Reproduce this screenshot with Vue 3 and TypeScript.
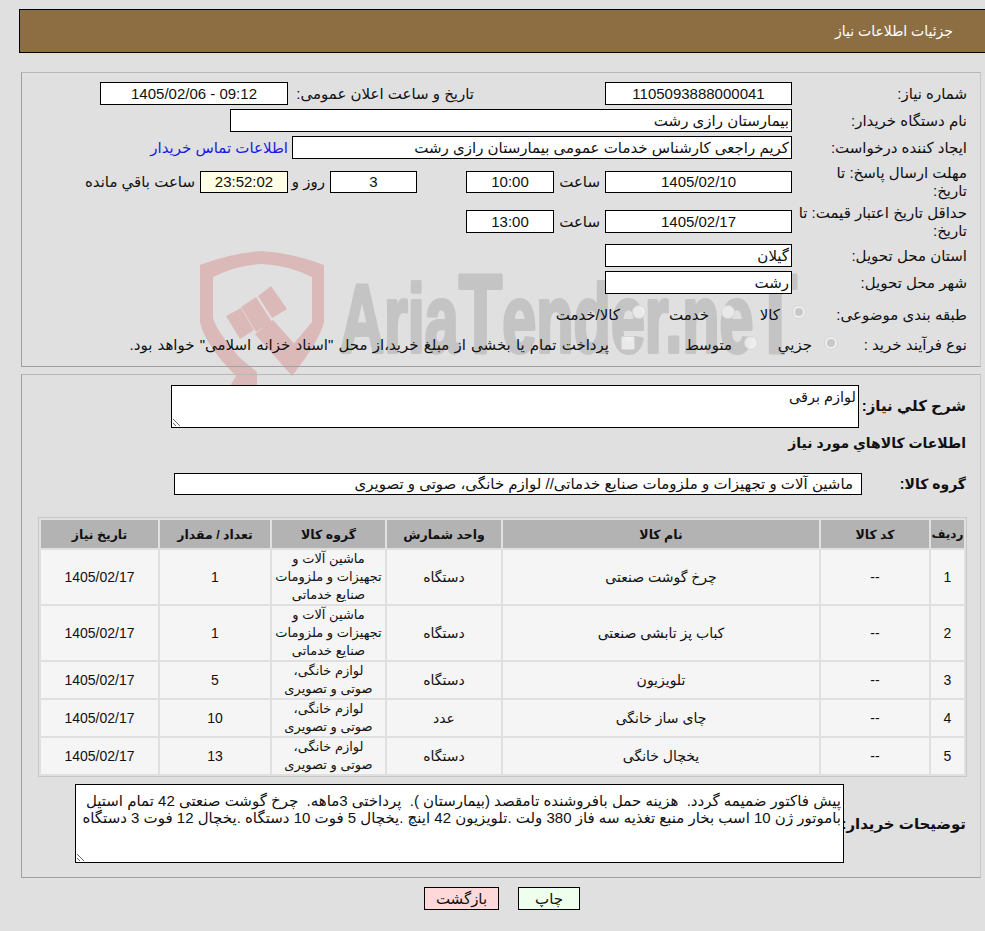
<script setup lang="ts">
const heavy = 'ماشین آلات و\nتجهیزات و ملزومات\nصنایع خدماتی'
const home = 'لوازم خانگی،\nصوتی و تصویری'
const rows = [
  { id: 1, name: 'چرخ گوشت صنعتی', unit: 'دستگاه', group: heavy, qty: 1, tall: true },
  { id: 2, name: 'کباب پز تابشی صنعتی', unit: 'دستگاه', group: heavy, qty: 1, tall: true },
  { id: 3, name: 'تلویزیون', unit: 'دستگاه', group: home, qty: 5, tall: false },
  { id: 4, name: 'چای ساز خانگی', unit: 'عدد', group: home, qty: 10, tall: false },
  { id: 5, name: 'یخچال خانگی', unit: 'دستگاه', group: home, qty: 13, tall: false },
]
const summary = 'لوازم برقی'
const notes = 'پیش فاکتور ضمیمه گردد.  هزینه حمل بافروشنده تامقصد (بیمارستان ).  پرداختی 3ماهه.  چرخ گوشت صنعتی 42 تمام استیل\nباموتور ژن 10 اسب بخار منبع تغذیه سه فاز 380 ولت .تلویزیون 42 اینچ .یخچال 5 فوت 10 دستگاه .یخچال 12 فوت 3 دستگاه'
</script>

<template>
  <div class="page">
    <svg class="mark" width="620" height="160" viewBox="190 235 620 160">
      <path class="pink" d="M200 265 Q232 253 262 251 Q292 253 324 265 L324 322 Q320 340 292 376 L280 360 L312 322 L312 277 Q287 265 262 264 Q237 265 213 277 L213 318 Q217 332 240 358 L257 372 L257 386 L230 386 L236 376 Q205 345 200 322 Z" />
      <path class="pink" d="M255 334 L273 320 L300 350 L292 376 Z" />
      <path class="pink" d="M226 316 L241 308 L254 330 L240 339 Z" />
      <path class="pink" d="M241 307 L256 297 L272 322 L256 332 Z" />
      <path class="pink" d="M258 296 L271 286 L287 309 L272 318 Z" />
      <text x="340" y="352" textLength="457" lengthAdjust="spacingAndGlyphs" class="mark-text">Aria<tspan class="cap">T</tspan>ender.ne<tspan class="cap">T</tspan></text>
    </svg>

    <header class="title"><span>جزئیات اطلاعات نیاز</span></header>

    <section class="box top">
      <div class="row r1">
        <label class="lbl">شماره نیاز:</label>
        <div class="field w187 c">1105093888000041</div>
        <label class="pub">تاریخ و ساعت اعلان عمومی:</label>
        <div class="field w188 c">09:12 - 1405/02/06</div>
      </div>
      <div class="row r1">
        <label class="lbl">نام دستگاه خریدار:</label>
        <div class="field w562">بیمارستان رازی رشت</div>
      </div>
      <div class="row r1">
        <label class="lbl">ایجاد کننده درخواست:</label>
        <div class="field w500">کریم راجعی کارشناس خدمات عمومی بیمارستان رازی رشت</div>
        <a class="link">اطلاعات تماس خریدار</a>
      </div>
      <div class="row r2">
        <label class="lbl">مهلت ارسال پاسخ: تا<br />تاریخ:</label>
        <div class="field w187 c">1405/02/10</div>
        <span class="hour">ساعت</span>
        <div class="field w88 c">10:00</div>
        <div class="field w87 c day">3</div>
        <span class="rooz">روز و</span>
        <div class="field w88 c count">23:52:02</div>
        <span class="rest">ساعت باقي مانده</span>
      </div>
      <div class="row r3">
        <label class="lbl">حداقل تاریخ اعتبار قیمت: تا تاریخ:</label>
        <div class="field w187 c">1405/02/17</div>
        <span class="hour">ساعت</span>
        <div class="field w88 c">13:00</div>
      </div>
      <div class="row r4">
        <label class="lbl">استان محل تحویل:</label>
        <div class="field w187">گیلان</div>
      </div>
      <div class="row r1">
        <label class="lbl">شهر محل تحویل:</label>
        <div class="field w187">رشت</div>
      </div>
      <div class="row r5">
        <label class="lbl">طبقه بندی موضوعی:</label>
        <div class="options o1">
          <i class="radio on"></i><span class="t1">کالا</span>
          <i class="radio"></i><span class="t2">خدمت</span>
          <i class="radio"></i><span>کالا/خدمت</span>
        </div>
      </div>
      <div class="row r6">
        <label class="lbl lbl2">نوع فرآیند خرید :</label>
        <div class="options o2">
          <i class="radio on"></i><span class="t3">جزيي</span>
          <i class="radio"></i><span class="t4">متوسط</span>
          <i class="check"></i><span class="pay">پرداخت تمام یا بخشی از مبلغ خرید،از محل "اسناد خزانه اسلامی" خواهد بود.</span>
        </div>
      </div>
    </section>

    <section class="box bottom">
      <div class="desc">
        <label class="blbl">شرح كلي نياز:</label>
        <textarea class="ta ta1" readonly :value="summary"></textarea>
      </div>
      <h3 class="sub">اطلاعات کالاهاي مورد نياز</h3>
      <div class="grp">
        <label class="blbl g">گروه کالا:</label>
        <div class="field grpf">ماشین آلات و تجهیزات و ملزومات صنایع خدماتی// لوازم خانگی، صوتی و تصویری</div>
      </div>
      <table class="tbl">
        <colgroup>
          <col class="c1" /><col class="c2" /><col class="c3" /><col class="c4" />
          <col class="c5" /><col class="c6" /><col class="c7" />
        </colgroup>
        <thead>
          <tr>
            <th class="first">ردیف</th><th>کد کالا</th><th>نام کالا</th><th>واحد شمارش</th><th>گروه کالا</th><th>تعداد / مقدار</th><th>تاریخ نیاز</th>
          </tr>
        </thead>
        <tbody>
          <tr v-for="r in rows" :key="r.id" :class="{ tall: r.tall }">
            <td class="id">{{ r.id }}</td>
            <td>--</td>
            <td>{{ r.name }}</td>
            <td>{{ r.unit }}</td>
            <td class="gr">{{ r.group }}</td>
            <td>{{ r.qty }}</td>
            <td>1405/02/17</td>
          </tr>
        </tbody>
      </table>
      <div class="notes">
        <label class="blbl n">توضیحات خریدار:</label>
        <textarea class="ta ta2" readonly :value="notes"></textarea>
      </div>
    </section>

    <div class="actions">
      <button class="btn print">چاپ</button>
      <button class="btn back">بازگشت</button>
    </div>
  </div>
</template>

<style>
html, body { background: #e0e0e0; }
</style>

<style scoped>
.page {
  position: relative;
  width: 985px;
  height: 931px;
  overflow: hidden;
  box-sizing: border-box;
  padding-top: 9px;
  background: #e0e0e0;
  direction: rtl;
  font-family: "Liberation Sans", "DejaVu Sans", sans-serif;
  font-size: 15px;
  color: #111;
}
.mark { position: absolute; left: 190px; top: 235px; }
.pink { fill: #dcb9b9; }
.mark-text {
  font-family: "Liberation Sans", sans-serif;
  font-weight: 700;
  font-size: 96px;
  fill: #c4c4c4;
  stroke: #c4c4c4;
  stroke-width: 4px;
  stroke-linejoin: round;
  direction: ltr;
  unicode-bidi: embed;
}
.cap { font-size: 112px; }
.title {
  position: relative;
  margin-left: 19px;
  height: 44px;
  box-sizing: border-box;
  border: 1px solid #000;
  border-right: 0;
  background: #8d6e42;
  color: #fff;
  display: flex;
  align-items: center;
  padding-right: 32px;
  font-size: 14px;
}
.box {
  position: relative;
  margin: 0 4px 0 0;
  margin-left: 21px;
  box-sizing: border-box;
  border: 1px solid #a8a8a8;
  border-color: #b8b8b8 #c8c8c8 #a0a0a0 #a0a0a0;
}
.top { margin-top: 19px; height: 295px; padding-top: 9px; }
.bottom { margin-top: 7px; height: 504px; padding-top: 10px; }
.row { display: flex; align-items: center; height: 23px; margin-bottom: 4px; padding-right: 13px; }
.r2 { margin-top: 11px; margin-bottom: 17px; }
.r2 .field { height: 22px; line-height: 20px; }
.r3 { margin-bottom: 11px; }
.r4 { margin-bottom: 4px; }
.r5 { margin-top: 9px; margin-bottom: 7px; }
.lbl { width: 175px; flex: none; box-sizing: border-box; line-height: 18px; }
.lbl2 { width: 129px; white-space: nowrap; }
.field {
  box-sizing: border-box;
  height: 23px;
  line-height: 21px;
  border: 1px solid #000;
  background: #fff;
  padding: 0 2px;
  flex: none;
  white-space: nowrap;
}
.c { text-align: center; }
.w187 { width: 187px; }
.w188 { width: 188px; }
.w562 { width: 562px; }
.w500 { width: 500px; }
.w88 { width: 88px; }
.w87 { width: 87px; }
.pub { margin-right: 131px; width: 186px; flex: none; white-space: nowrap; }
.link { color: #1a1ae6; margin-right: 4px; white-space: nowrap; }
.hour { width: 51px; padding-right: 5px; box-sizing: border-box; flex: none; }
.day { margin-right: 49px; }
.rooz { width: 42px; flex: none; box-sizing: border-box; padding-right: 5px; white-space: nowrap; }
.count { background: #ffffe6; }
.rest { margin-right: 5px; white-space: nowrap; }
.options { display: flex; align-items: center; white-space: nowrap; }
.radio, .check {
  flex: none;
  width: 14px;
  height: 14px;
  background: rgba(240, 240, 240, 0.85);
  border: 1px solid #d6d6d6;
  box-sizing: border-box;
}
.radio { border-radius: 50%; position: relative; }
.radio.on::after { content: ""; position: absolute; inset: 2px; border-radius: 50%; background: #c8c8c8; }
.check { border-radius: 2px; }
.options i { margin-left: 12px; margin-top: -5px; }
.o1 { margin-right: -14px; }
.o2 i { margin-top: -4px; }
.t1 { width: 45px; }
.t2 { width: 63px; }
.t3 { width: 54px; }
.t4 { width: 97px; }
.pay { word-spacing: 1px; }
.desc, .grp, .notes { display: flex; padding-right: 14px; }
.blbl { font-weight: 700; font-size: 15px; flex: none; box-sizing: border-box; white-space: nowrap; }
.desc { height: 43px; }
.desc .blbl { width: 107px; padding-top: 12px; }
.ta {
  box-sizing: border-box;
  border: 1px solid #000;
  background: #fff;
  padding: 2px;
  margin: 0;
  font-family: inherit;
  color: #111;
  overflow: hidden;
  outline: none;
}
.ta1 { width: 688px; height: 43px; font-size: 14.5px; padding-top: 3px; }
.ta2 { width: 769px; height: 79px; padding: 7px 2px 0; font-size: 15px; line-height: 17px; white-space: pre; }
.sub { margin: 5px 14px 0 0; height: 20px; line-height: 20px; font-size: 14px; font-weight: 700; }
.grp { margin-top: 20px; height: 22px; align-items: center; }
.grp .blbl { width: 104px; font-size: 14px; }
.grpf { width: 688px; height: 22px; line-height: 20px; padding-right: 8px; }
.tbl {
  margin: 22px 13px 0 0;
  width: 928px;
  box-sizing: border-box;
  table-layout: fixed;
  border-collapse: separate;
  border-spacing: 2px;
  border: 1px solid #c8c8c8;
  font-size: 14px;
}
.c1 { width: 33px; }
.c2 { width: 108px; }
.c3 { width: 316px; }
.c4 { width: 114px; }
.c5 { width: 113px; }
.c6 { width: 110px; }
.c7 { width: 117px; }
.tbl th {
  height: 28px;
  padding: 0;
  background: #b3b3b3;
  font-weight: 700;
  font-size: 12.5px;
  white-space: nowrap;
}
.tbl th.first { font-size: 12px; }
.tbl td {
  background: #f5f5f5;
  text-align: center;
  height: 36px;
  padding: 0;
  line-height: 18px;
}
.tbl .tall td { height: 53px; }
.tbl td.gr { white-space: pre; font-size: 13px; }
.notes { margin-top: 7px; }
.notes .blbl { width: 122px; padding-top: 31px; }
.actions { display: flex; padding-right: 405px; margin-top: 9px; gap: 19px; }
.btn {
  height: 23px;
  box-sizing: border-box;
  border: 1px solid #000;
  font-family: inherit;
  font-size: 15px;
  color: #111;
  padding: 0;
}
.back { width: 75px; background: #ffd9d9; }
.print { width: 62px; background: #eeffee; }
</style>
